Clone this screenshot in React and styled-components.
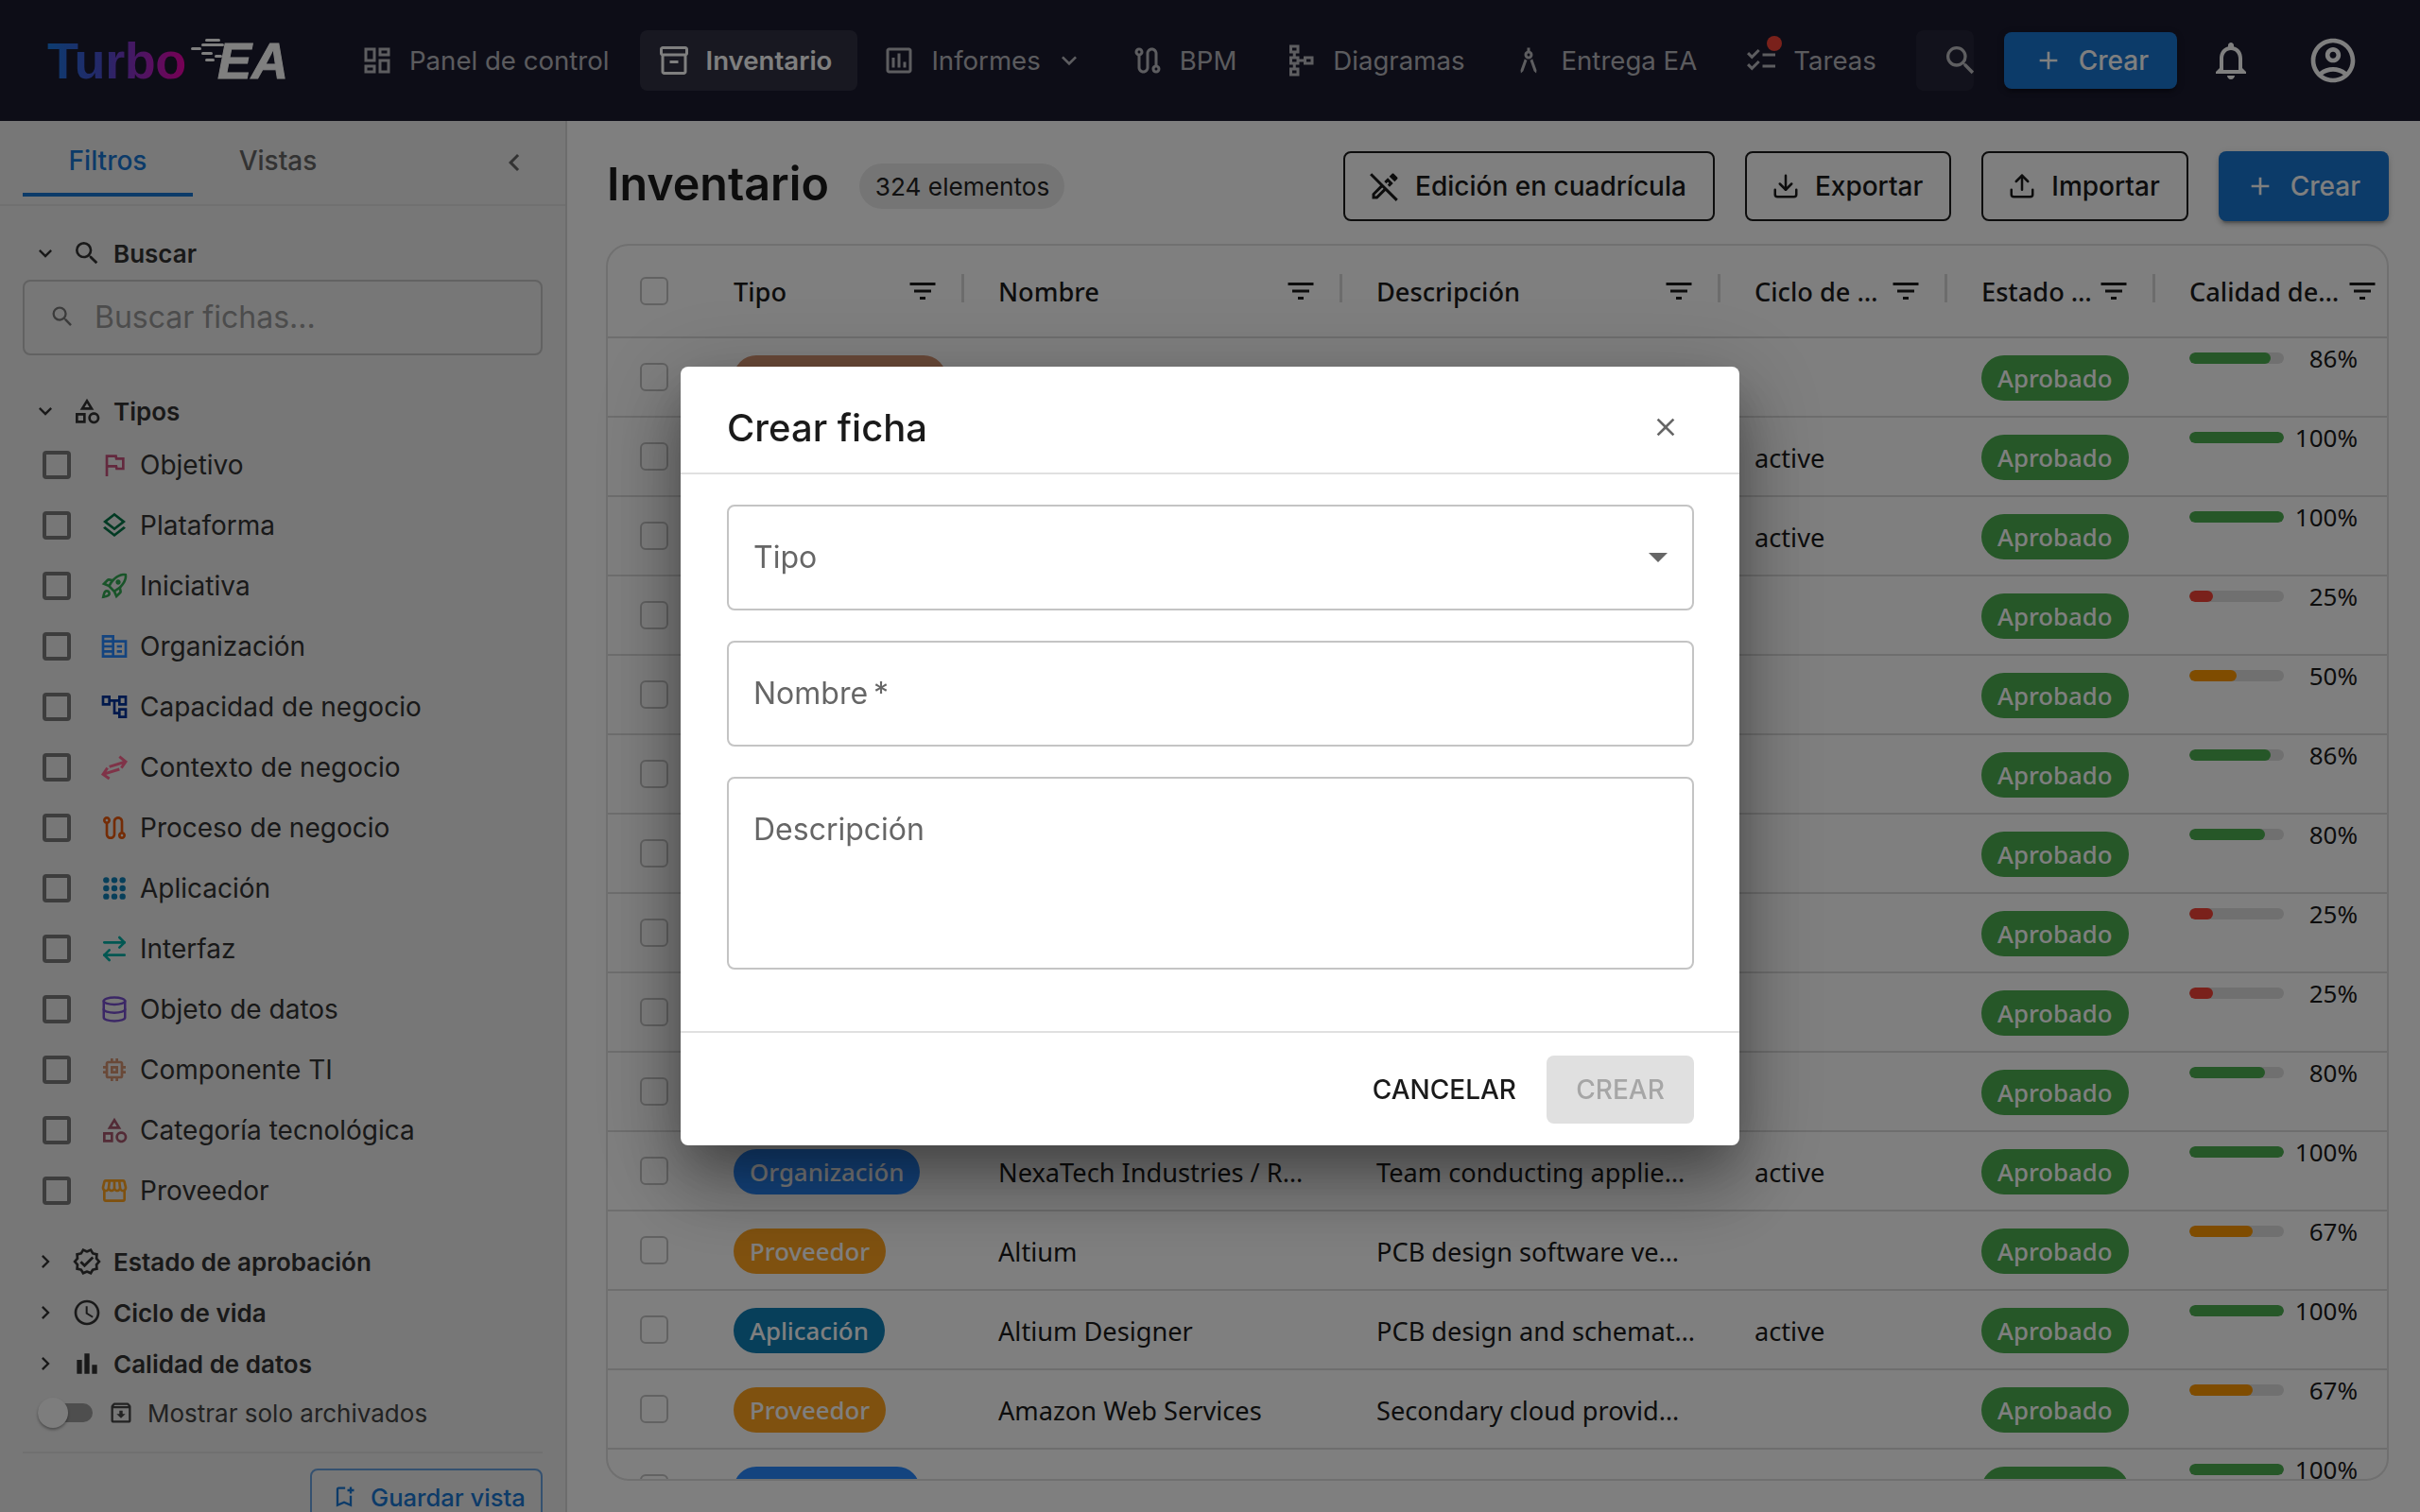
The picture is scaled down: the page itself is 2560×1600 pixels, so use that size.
import React from 'react';
import styled, { createGlobalStyle } from 'styled-components';
import {
  MdOutlineDashboard, MdOutlineInventory2, MdOutlineAssessment, MdOutlineRoute, MdOutlineSchema,
  MdOutlineArchitecture, MdChecklist, MdSearch, MdAdd, MdOutlineNotifications, MdOutlineAccountCircle,
  MdOutlineCategory, MdOutlineFlag, MdOutlineLayers, MdOutlineRocketLaunch, MdOutlineCorporateFare,
  MdOutlineAccountTree, MdOutlineMemory, MdOutlineStorefront,
  MdOutlineVerified, MdOutlineSchedule, MdBarChart, MdOutlineArchive, MdOutlineBookmarkAdd,
  MdFilterList, MdClose, MdArrowDropDown, MdChevronLeft, MdChevronRight,
  MdExpandMore, MdOutlineEditOff,
} from 'react-icons/md';
import { ArrowRightLeft, Database, Download, Upload } from 'lucide-react';

const GlobalStyle = createGlobalStyle`
  html, body { margin: 0; padding: 0; height: 100%; overflow: hidden; background: #fff; }
  body { font-family: Inter, "Noto Sans", sans-serif; color: #1a1a1a; }
  * { box-sizing: border-box; }
`;

const tableFont = '"Noto Sans", "Open Sans", sans-serif';

const Page = styled.div`
  height: 1600px;
  display: flex;
  flex-direction: column;
  overflow: hidden;
`;

/* top bar */
const TopBar = styled.header`
  height: 128px;
  flex: none;
  background: #1a1a2e;
  display: flex;
  align-items: center;
  padding: 0 52px 0 50px;
`;

const Logo = styled.div`
  width: 255px;
  margin-right: 58px;
  display: flex;
  align-items: center;
  flex: none;
`;

const LogoTurbo = styled.span`
  font-family: "Liberation Sans", sans-serif;
  font-weight: 700;
  font-size: 54px;
  letter-spacing: -0.4px;
  line-height: 1;
  background: linear-gradient(90deg, #1a78e0 0%, #4a4fd0 40%, #b020c0 75%, #f000a8 100%);
  -webkit-background-clip: text;
  background-clip: text;
  color: transparent;
`;

const LogoEA = styled.span`
  position: relative;
  margin-left: 33px;
  font-family: "Liberation Sans", sans-serif;
  font-style: italic;
  font-weight: 700;
  font-size: 54px;
  line-height: 1;
  color: #fff;
  -webkit-text-stroke: 1px #fff;

  svg {
    position: absolute;
    left: -30px;
    top: 4px;
  }
`;

const NavList = styled.nav`
  display: flex;
  align-items: center;
  gap: 8px;
`;

const NavItem = styled.div`
  position: relative;
  height: 64px;
  display: flex;
  align-items: center;
  gap: 16px;
  padding: 0 ${(p) => (p.$active ? 27 : 24)}px 0 18px;
  border-radius: 8px;
  font-size: 27.6px;
  font-weight: ${(p) => (p.$active ? 600 : 400)};
  color: ${(p) => (p.$active ? '#fff' : 'rgba(255,255,255,.7)')};
  background: ${(p) => (p.$active ? 'rgba(255,255,255,.1)' : 'transparent')};
  white-space: nowrap;

  svg + svg { margin-left: -2px; margin-right: -1px; }
`;

const NavDot = styled.span`
  position: absolute;
  left: 42px;
  top: 6px;
  width: 16px;
  height: 16px;
  border-radius: 50%;
  background: #f44336;
`;

const TopRight = styled.div`
  margin-left: auto;
  display: flex;
  align-items: center;
`;

const SearchButton = styled.div`
  width: 61px;
  height: 64px;
  border-radius: 8px;
  background: rgba(255,255,255,.05);
  display: flex;
  align-items: center;
  justify-content: flex-end;
  overflow: hidden;
  color: rgba(255,255,255,.7);
  flex: none;
  margin-right: 32px;

  svg { margin-right: -6px; flex: none; }
`;

const PrimaryButton = styled.div`
  height: ${(p) => (p.$tall ? 74 : 60)}px;
  padding: 0 ${(p) => (p.$tall ? 30 : 30)}px 0 ${(p) => (p.$tall ? 28 : 31)}px;
  display: flex;
  align-items: center;
  gap: 16px;
  border-radius: 8px;
  background: #1976d2;
  color: #fff;
  font-size: 28px;
  font-weight: 500;
  box-shadow: 0 6px 2px -4px rgba(0,0,0,.2), 0 4px 4px 0 rgba(0,0,0,.14), 0 2px 10px 0 rgba(0,0,0,.12);
  flex: none;
`;

const BarIcon = styled.div`
  width: 80px;
  height: 80px;
  margin-left: ${(p) => p.$ml}px;
  display: flex;
  align-items: center;
  justify-content: center;
  color: #fff;
  flex: none;
`;

/* body */
const Body = styled.div`
  flex: 1;
  min-height: 0;
  display: flex;
`;

const Sidebar = styled.aside`
  width: 600px;
  flex: none;
  background: #eeeeee;
  border-right: 2px solid #d8d8d8;
  overflow: hidden;
`;

const Tabs = styled.div`
  height: 90px;
  padding: 0 34px 0 24px;
  border-bottom: 2px solid #e0e0e0;
  display: flex;
  align-items: stretch;
`;

const Tab = styled.div`
  width: 180px;
  height: 80px;
  padding-top: 8px;
  display: flex;
  align-items: center;
  justify-content: center;
  font-size: 28px;
  font-weight: 500;
  color: ${(p) => (p.$active ? '#1976d2' : '#666')};
  border-bottom: 4px solid ${(p) => (p.$active ? '#1976d2' : 'transparent')};
`;

const CollapseIcon = styled.div`
  margin-left: auto;
  width: 40px;
  display: flex;
  align-items: center;
  justify-content: center;
  color: #666;
  height: 88px;
`;

const FilterBody = styled.div`
  padding: 23px 24px 0 24px;
`;

const SectionHead = styled.div`
  height: 54px;
  display: flex;
  align-items: center;
  padding-left: 10px;
  font-size: 26px;
  font-weight: 600;
  color: #333;
  margin-top: ${(p) => p.$mt || 0}px;

  > svg:first-child { margin-right: 14px; }
  > svg:nth-child(2) { margin-right: 12px; }
`;

const SearchField = styled.div`
  height: 80px;
  border: 2px solid #c4c4c4;
  border-radius: 8px;
  margin-top: 1px;
  padding-bottom: 2px;
  display: flex;
  align-items: center;
  gap: 20px;
  padding-left: 26px;
  font-size: 32px;
  color: #999;
`;

const TypeList = styled.div`
  margin-top: -2px;
`;

const TypeRow = styled.div`
  height: 64px;
  display: flex;
  align-items: center;
  padding-left: 21px;
  font-size: 28px;
  color: #333;
`;

const TypeIcon = styled.span`
  width: 32px;
  height: 32px;
  margin: 0 11px 0 30px;
  display: flex;
  align-items: center;
  justify-content: center;
  color: ${(p) => p.$color};
`;

const Checkbox = styled.span`
  display: block;
  flex: none;
  width: 30px;
  height: 30px;
  border: ${(p) => (p.$thin ? 2 : 4)}px solid ${(p) => (p.$thin ? '#c4c4c4' : '#7a7a7a')};
  border-radius: ${(p) => (p.$thin ? 6 : 4)}px;
`;

const ArchiveRow = styled.div`
  height: 50px;
  display: flex;
  align-items: center;
  padding-left: 16px;
  font-size: 26px;
  color: #444;
`;

const ArchiveLabel = styled.span`
  margin-left: 14px;
`;

const SwitchTrack = styled.span`
  position: relative;
  width: 58px;
  height: 20px;
  border-radius: 10px;
  background: #9c9c9c;
  margin-right: 16px;
  flex: none;
`;

const SwitchThumb = styled.span`
  position: absolute;
  left: 0;
  top: -6px;
  width: 32px;
  height: 32px;
  border-radius: 50%;
  background: #fafafa;
  box-shadow: 0 2px 3px rgba(0,0,0,.35);
`;

const Divider = styled.div`
  height: 2px;
  background: #e0e0e0;
  margin-top: 16px;
`;

const SaveViewRow = styled.div`
  display: flex;
  justify-content: flex-end;
  margin-top: 16px;
`;

const SaveViewButton = styled.div`
  width: 246px;
  height: 60px;
  border: 2px solid #6aa3e0;
  border-radius: 8px;
  display: flex;
  align-items: center;
  gap: 14px;
  padding-left: 20px;
  font-size: 25.6px;
  font-weight: 500;
  color: #1976d2;
  flex: none;
`;

/* main */
const Main = styled.main`
  flex: 1;
  min-width: 0;
  display: flex;
  flex-direction: column;
  padding: 32px 33px 33px 41px;
`;

const ToolRow = styled.div`
  height: 74px;
  display: flex;
  align-items: center;
  gap: 32px;
  flex: none;
`;

const Title = styled.h1`
  margin: -6px 0 0 1px;
  font-size: 48.4px;
  font-weight: 600;
  color: #1a1a1a;
  white-space: nowrap;
`;

const CountChip = styled.span`
  height: 48px;
  padding: 0 16px 0 17px;
  border-radius: 24px;
  background: #ebebeb;
  display: flex;
  align-items: center;
  font-size: 26.2px;
  color: #222;
  white-space: nowrap;
`;

const ToolButtons = styled.div`
  margin-left: auto;
  display: flex;
  gap: 32px;
`;

const OutlineButton = styled.div`
  height: 74px;
  padding: 0 28px 0 ${(p) => p.$pl}px;
  border: 2px solid #1a1a1a;
  border-radius: 8px;
  display: flex;
  align-items: center;
  gap: ${(p) => p.$gap}px;
  font-size: 28px;
  font-weight: 500;
  color: #1a1a1a;
  white-space: nowrap;
`;

const Grid = styled.div`
  flex: 1;
  min-height: 0;
  margin-top: 24px;
  border: 2px solid #e0e0e0;
  border-radius: 24px;
  overflow: hidden;
`;

const GridRow = styled.div`
  height: ${(p) => (p.$head ? 98 : 84)}px;
  display: grid;
  grid-template-columns: 97px 280px 400px 400px 240px 220px 1fr;
  border-bottom: 2px solid #dcdcdc;
  font-family: ${tableFont};
  font-size: 27.2px;
  color: #1a1a1a;
`;

const CheckCell = styled.div`
  display: flex;
  align-items: center;
  padding-left: 34px;
`;

const HeadCell = styled.div`
  position: relative;
  min-width: 0;
  display: flex;
  align-items: center;
  padding: 0 ${(p) => (p.$last ? 8 : 26)}px 0 36px;
  font-weight: 500;
  white-space: nowrap;

  span { flex: 1; min-width: 0; }

  svg { flex: none; }

  &::after {
    content: '';
    display: ${(p) => (p.$last ? 'none' : 'block')};
    position: absolute;
    right: 0;
    top: 30px;
    width: 3px;
    height: 30px;
    background: #d8d8d8;
  }
`;

const Cell = styled.div`
  min-width: 0;
  display: flex;
  align-items: center;
  padding: 2px 0 0 36px;
  white-space: nowrap;
  overflow: hidden;
`;

const Pill = styled.span`
  height: 48px;
  padding: 0 17px;
  border-radius: 24px;
  display: inline-flex;
  align-items: center;
  background: ${(p) => p.$bg};
  color: #fff;
  font-size: 25.8px;
  font-weight: 500;
  white-space: nowrap;
`;

const QualityCell = styled.div`
  padding: 15px 0 0 36px;
  display: flex;
  align-items: flex-start;
  font-size: 26px;
`;

const QualityTrack = styled.div`
  width: 100px;
  height: 12px;
  border-radius: 6px;
  background: #e0e0e0;
  overflow: hidden;
  flex: none;
`;

const QualityFill = styled.div`
  height: 100%;
  border-radius: 6px;
  background: ${(p) => p.$color};
`;

const QualityValue = styled.span`
  width: 78px;
  margin-top: -12px;
  text-align: right;
`;

/* modal */
const Backdrop = styled.div`
  position: fixed;
  inset: 0;
  background: rgba(0,0,0,.5);
  display: flex;
  align-items: center;
  justify-content: center;
`;

const Modal = styled.div`
  width: 1120px;
  height: 824px;
  background: #fff;
  border-radius: 8px;
  display: flex;
  flex-direction: column;
  box-shadow: 0 22px 48px -14px rgba(0,0,0,.3), 0 48px 76px 6px rgba(0,0,0,.2), 0 18px 92px 16px rgba(0,0,0,.16);
`;

const ModalHead = styled.div`
  height: 114px;
  flex: none;
  border-bottom: 2px solid #e0e0e0;
  display: flex;
  align-items: center;
  justify-content: space-between;
  padding: 16px 62px 0 49px;
  font-size: 40px;
  font-weight: 500;
  color: #1a1a1a;
  svg { color: #666; }
`;

const ModalBody = styled.div`
  flex: 1;
  padding: 32px 48px 0 49px;
  display: flex;
  flex-direction: column;
  gap: 32px;
`;

const Field = styled.div`
  height: ${(p) => p.$h}px;
  border: 2px solid #c4c4c4;
  border-radius: 8px;
  display: flex;
  align-items: ${(p) => (p.$top ? 'flex-start' : 'center')};
  justify-content: space-between;
  padding: ${(p) => (p.$top ? '34px 26px 0' : '0 26px 2px')};
  font-size: 32px;
  color: #666;
  svg { margin-right: -14px; }
`;

const ModalFoot = styled.div`
  height: 121px;
  flex: none;
  border-top: 2px solid #e0e0e0;
  display: flex;
  align-items: center;
  justify-content: flex-end;
  gap: 32px;
  padding: 0 48px 0 0;
`;

const TextButton = styled.span`
  font-size: 28px;
  font-weight: 500;
  color: #1a1a1a;
`;

const DisabledButton = styled.span`
  width: 156px;
  height: 72px;
  border-radius: 8px;
  background: #e0e0e0;
  color: #a6a6a6;
  font-size: 28px;
  font-weight: 500;
  display: flex;
  align-items: center;
  justify-content: center;
`;

// small drawn icons that the packages don't have in this shape
const ContextIcon = ({ size }) => (
  <svg width={size} height={size} viewBox="0 0 24 24" fill="none" stroke="currentColor" strokeWidth="2.2">
    <path d="M8 11.5 21 7.5M16 3.5l5 4-3.5 5M16 13.5 3 17.5M8 21l-5-3.5 3.5-5" />
  </svg>
);

const DotsIcon = ({ size }) => (
  <svg width={size} height={size} viewBox="0 0 24 24" fill="currentColor">
    {[5.5, 12, 18.5].map((y) =>
      [5.5, 12, 18.5].map((x) => <circle key={`${x}-${y}`} cx={x} cy={y} r="2.4" />)
    )}
  </svg>
);

const navItems = [
  { icon: MdOutlineDashboard, label: 'Panel de control' },
  { icon: MdOutlineInventory2, label: 'Inventario', active: true },
  { icon: MdOutlineAssessment, label: 'Informes', chevron: true },
  { icon: MdOutlineRoute, label: 'BPM' },
  { icon: MdOutlineSchema, label: 'Diagramas' },
  { icon: MdOutlineArchitecture, label: 'Entrega EA' },
  { icon: MdChecklist, label: 'Tareas', dot: true },
];

const types = [
  { icon: MdOutlineFlag, label: 'Objetivo', color: '#c7527d' },
  { icon: MdOutlineLayers, label: 'Plataforma', color: '#027446' },
  { icon: MdOutlineRocketLaunch, label: 'Iniciativa', color: '#33a852' },
  { icon: MdOutlineCorporateFare, label: 'Organización', color: '#2889ff' },
  { icon: MdOutlineAccountTree, label: 'Capacidad de negocio', color: '#003399' },
  { icon: ContextIcon, label: 'Contexto de negocio', color: '#fe6690' },
  { icon: MdOutlineRoute, label: 'Proceso de negocio', color: '#e8590c' },
  { icon: DotsIcon, label: 'Aplicación', color: '#0f7eb5' },
  { icon: ArrowRightLeft, label: 'Interfaz', color: '#02afa4' },
  { icon: Database, label: 'Objeto de datos', color: '#774fcc', size: 30 },
  { icon: MdOutlineMemory, label: 'Componente TI', color: '#d29270' },
  { icon: MdOutlineCategory, label: 'Categoría tecnológica', color: '#a6566d' },
  { icon: MdOutlineStorefront, label: 'Proveedor', color: '#ffa31f' },
];

const pillColors = {
  'Componente TI': '#d29270',
  Organización: '#2889ff',
  Proveedor: '#ffa31f',
  Aplicación: '#0f7eb5',
};

const rows = [
  { type: 'Componente TI', q: 86 },
  { life: 'active', q: 100 },
  { life: 'active', q: 100 },
  { q: 25 },
  { q: 50 },
  { q: 86 },
  { q: 80 },
  { q: 25 },
  { q: 25 },
  { q: 80 },
  { type: 'Organización', name: 'NexaTech Industries / R…', desc: 'Team conducting applie…', life: 'active', q: 100 },
  { type: 'Proveedor', name: 'Altium', desc: 'PCB design software ve…', q: 67 },
  { type: 'Aplicación', name: 'Altium Designer', desc: 'PCB design and schemat…', life: 'active', q: 100 },
  { type: 'Proveedor', name: 'Amazon Web Services', desc: 'Secondary cloud provid…', q: 67 },
  { type: 'Organización', name: 'NexaTech Industries / A…', desc: 'Team building platform…', life: 'active', q: 100 },
];

const qualityColor = (q) => (q >= 80 ? '#4caf50' : q >= 50 ? '#ff9800' : '#f44336');

const columns = ['Tipo', 'Nombre', 'Descripción', 'Ciclo de …', 'Estado …', 'Calidad de…'];

const App = () => (
  <Page>
    <GlobalStyle />
    <TopBar>
      <Logo>
        <LogoTurbo>Turbo</LogoTurbo>
        <LogoEA>
          <svg width="50" height="30" viewBox="0 0 50 30" fill="#fff">
            <rect x="17" y="0" width="16" height="3" rx="1.5" />
            <rect x="2" y="9" width="11" height="3" rx="1.5" />
            <rect x="13" y="5" width="24" height="3" rx="1.5" />
            <rect x="13" y="14" width="12" height="3" rx="1.5" />
            <rect x="27" y="17" width="8" height="3" rx="1.5" />
            <rect x="17" y="21" width="10" height="3" rx="1.5" />
          </svg>
          EA
        </LogoEA>
      </Logo>
      <NavList>
        {navItems.map((item) => (
          <NavItem key={item.label} $active={item.active}>
            <item.icon size={36} />
            {item.label}
            {item.chevron && <MdExpandMore size={32} />}
            {item.dot && <NavDot />}
          </NavItem>
        ))}
      </NavList>
      <TopRight>
        <SearchButton>
          <MdSearch size={40} />
        </SearchButton>
        <PrimaryButton>
          <MdAdd size={32} />
          Crear
        </PrimaryButton>
        <BarIcon $ml={17}>
          <MdOutlineNotifications size={48} />
        </BarIcon>
        <BarIcon $ml={28}>
          <MdOutlineAccountCircle size={56} />
        </BarIcon>
      </TopRight>
    </TopBar>

    <Body>
      <Sidebar>
        <Tabs>
          <Tab $active>Filtros</Tab>
          <Tab>Vistas</Tab>
          <CollapseIcon>
            <MdChevronLeft size={36} />
          </CollapseIcon>
        </Tabs>
        <FilterBody>
          <SectionHead>
            <MdExpandMore size={28} />
            <MdSearch size={32} />
            Buscar
          </SectionHead>
          <SearchField>
            <MdSearch size={28} color="#777" />
            Buscar fichas...
          </SearchField>
          <SectionHead $mt={32}>
            <MdExpandMore size={28} />
            <MdOutlineCategory size={32} />
            Tipos
          </SectionHead>
          <TypeList>
            {types.map((t) => (
              <TypeRow key={t.label}>
                <Checkbox />
                <TypeIcon $color={t.color}>
                  <t.icon size={t.size || 32} />
                </TypeIcon>
                {t.label}
              </TypeRow>
            ))}
          </TypeList>
          <SectionHead $mt={16}>
            <MdChevronRight size={28} />
            <MdOutlineVerified size={32} />
            Estado de aprobación
          </SectionHead>
          <SectionHead>
            <MdChevronRight size={28} />
            <MdOutlineSchedule size={32} />
            Ciclo de vida
          </SectionHead>
          <SectionHead>
            <MdChevronRight size={28} />
            <MdBarChart size={32} />
            Calidad de datos
          </SectionHead>
          <ArchiveRow>
            <SwitchTrack>
              <SwitchThumb />
            </SwitchTrack>
            <MdOutlineArchive size={28} />
            <ArchiveLabel>Mostrar solo archivados</ArchiveLabel>
          </ArchiveRow>
          <Divider />
          <SaveViewRow>
            <SaveViewButton>
              <MdOutlineBookmarkAdd size={28} />
              Guardar vista
            </SaveViewButton>
          </SaveViewRow>
        </FilterBody>
      </Sidebar>

      <Main>
        <ToolRow>
          <Title>Inventario</Title>
          <CountChip>324 elementos</CountChip>
          <ToolButtons>
            <OutlineButton $pl={24} $gap={14}>
              <MdOutlineEditOff size={36} />
              Edición en cuadrícula
            </OutlineButton>
            <OutlineButton $pl={26} $gap={16}>
              <Download size={30} strokeWidth={2} />
              Exportar
            </OutlineButton>
            <OutlineButton $pl={26} $gap={16}>
              <Upload size={30} strokeWidth={2} />
              Importar
            </OutlineButton>
            <PrimaryButton $tall>
              <MdAdd size={32} />
              Crear
            </PrimaryButton>
          </ToolButtons>
        </ToolRow>
        <Grid>
          <GridRow $head>
            <CheckCell>
              <Checkbox $thin />
            </CheckCell>
            {columns.map((c, i) => (
              <HeadCell key={c} $last={i === columns.length - 1}>
                <span>{c}</span>
                <MdFilterList size={36} />
              </HeadCell>
            ))}
          </GridRow>
          {rows.map((r, i) => (
            <GridRow key={i}>
              <CheckCell>
                <Checkbox $thin />
              </CheckCell>
              <Cell>{r.type && <Pill $bg={pillColors[r.type]}>{r.type}</Pill>}</Cell>
              <Cell>{r.name}</Cell>
              <Cell>{r.desc}</Cell>
              <Cell>{r.life}</Cell>
              <Cell>
                <Pill $bg="#4caf50">Aprobado</Pill>
              </Cell>
              <QualityCell>
                <QualityTrack>
                  <QualityFill $color={qualityColor(r.q)} style={{ width: `${r.q}%` }} />
                </QualityTrack>
                <QualityValue>{r.q}%</QualityValue>
              </QualityCell>
            </GridRow>
          ))}
        </Grid>
      </Main>
    </Body>

    <Backdrop>
      <Modal>
        <ModalHead>
          Crear ficha
          <MdClose size={32} />
        </ModalHead>
        <ModalBody>
          <Field $h={112}>
            Tipo
            <MdArrowDropDown size={48} />
          </Field>
          <Field $h={112}>Nombre{'\u2009'}*</Field>
          <Field $h={204} $top>
            Descripción
          </Field>
        </ModalBody>
        <ModalFoot>
          <TextButton>CANCELAR</TextButton>
          <DisabledButton>CREAR</DisabledButton>
        </ModalFoot>
      </Modal>
    </Backdrop>
  </Page>
);

export default App;
